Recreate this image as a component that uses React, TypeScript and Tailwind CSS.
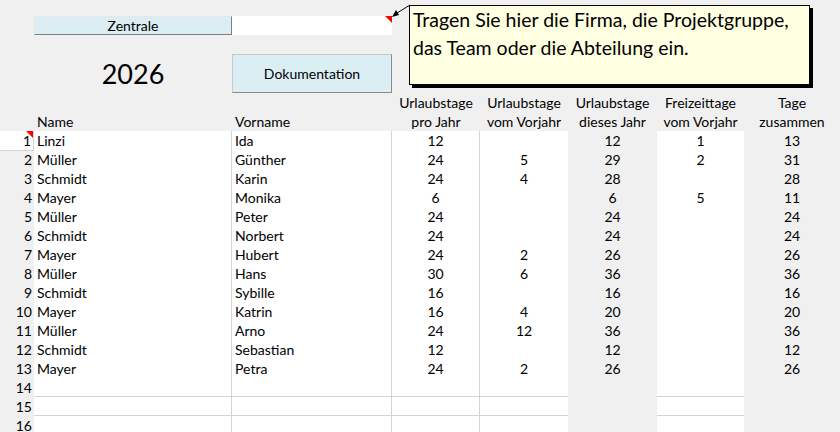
import React from "react";

const rows: string[][] = [
  ["Linzi", "Ida", "12", "", "12", "1", "13"],
  ["Müller", "Günther", "24", "5", "29", "2", "31"],
  ["Schmidt", "Karin", "24", "4", "28", "", "28"],
  ["Mayer", "Monika", "6", "", "6", "5", "11"],
  ["Müller", "Peter", "24", "", "24", "", "24"],
  ["Schmidt", "Norbert", "24", "", "24", "", "24"],
  ["Mayer", "Hubert", "24", "2", "26", "", "26"],
  ["Müller", "Hans", "30", "6", "36", "", "36"],
  ["Schmidt", "Sybille", "16", "", "16", "", "16"],
  ["Mayer", "Katrin", "16", "4", "20", "", "20"],
  ["Müller", "Arno", "24", "12", "36", "", "36"],
  ["Schmidt", "Sebastian", "12", "", "12", "", "12"],
  ["Mayer", "Petra", "24", "2", "26", "", "26"],
  ["", "", "", "", "", "", ""],
  ["", "", "", "", "", "", ""],
  ["", "", "", "", "", "", ""],
];

const grid = "grid grid-cols-[34px_198px_160px_88px_88px_89px_87px_96px]";

function RedTri({ className }: { className: string }) {
  return (
    <svg className={className} width="7" height="7" viewBox="0 0 7 7">
      <polygon points="0,0 7,0 7,7" fill="#ff0000" />
    </svg>
  );
}

export default function App() {
  return (
    <div className="relative w-[840px] h-[432px] overflow-hidden bg-[#f0f0f0] text-black font-['Lato',sans-serif] text-[14px] leading-[19px]">
      {/* top area */}
      <div className="h-[93px] pt-[16px]">
        <div className={grid}>
          <div />
          <div className="h-[19px] bg-[#dbeef4] border-t border-l border-[#e6e6e6] border-r-[#7f7f7f] border-b-[#7f7f7f] border-r border-b text-center leading-[17px]">
            Zentrale
          </div>
          <div className="relative h-[19px] bg-white">
            <RedTri className="absolute right-0 top-0" />
          </div>
        </div>
        <div className={grid + " mt-[19px]"}>
          <div />
          <div className="h-[39px] flex items-center justify-center text-[27px] leading-[39px]">2026</div>
          <div className="h-[39px] bg-[#dbeef4] border border-[#c8c8c8] border-r-[#8a8a8a] border-b-[#8a8a8a] flex items-center justify-center">
            Dokumentation
          </div>
        </div>
      </div>

      {/* header */}
      <div className={grid + " h-[38px]"}>
        <div />
        <div className="border-b border-[#a6a6a6] pl-[3px] pt-[19px]">Name</div>
        <div className="border-b border-[#a6a6a6] pl-[3px] pt-[19px]">Vorname</div>
        <div className="border-b border-[#a6a6a6] text-center">Urlaubstage<br />pro Jahr</div>
        <div className="border-b border-[#a6a6a6] text-center">Urlaubstage<br />vom Vorjahr</div>
        <div className="text-center">Urlaubstage<br />dieses Jahr</div>
        <div className="border-b border-[#a6a6a6] text-center">Freizeittage<br />vom Vorjahr</div>
        <div className="text-center">Tage<br />zusammen</div>
      </div>

      {/* rows */}
      {rows.map((r, i) => (
        <div key={i} className={grid + " h-[19px]"}>
          {i === 0 ? (
            <div className="relative bg-white border-r border-b border-[#d4d4d4] text-right pr-[2px]">
              {i + 1}
              <RedTri className="absolute right-0 top-0" />
            </div>
          ) : (
            <div className="text-right pr-[2px]">{i + 1}</div>
          )}
          <div className="bg-white border-r border-b border-[#d4d4d4] pl-[3px] whitespace-nowrap">{r[0]}</div>
          <div className="bg-white border-r border-b border-[#d4d4d4] pl-[3px] whitespace-nowrap">{r[1]}</div>
          <div className="bg-white border-r border-b border-[#d4d4d4] text-center">{r[2]}</div>
          <div className="bg-white border-b border-[#d4d4d4] text-center">{r[3]}</div>
          <div className="text-center">{r[4]}</div>
          <div className="bg-white border-b border-[#d4d4d4] text-center">{r[5]}</div>
          <div className="text-center">{r[6]}</div>
        </div>
      ))}

      {/* comment arrow */}
      <svg className="absolute left-[388px] top-[2px]" width="26" height="20" viewBox="0 0 26 20">
        <line x1="22" y1="3" x2="9" y2="11" stroke="#000" strokeWidth="1" />
        <polygon points="4,15 8,8 11,13" fill="#000" />
      </svg>

      {/* comment box */}
      <div className="absolute left-[409px] top-[5px] w-[401px] h-[80px] border border-black bg-[#ffffe1] shadow-[3px_3px_0_0_#000] px-[3px] text-[19.5px] leading-[28px] whitespace-nowrap">
        Tragen Sie hier die Firma, die Projektgruppe,
        <br />
        das Team oder die Abteilung ein.
      </div>
    </div>
  );
}
